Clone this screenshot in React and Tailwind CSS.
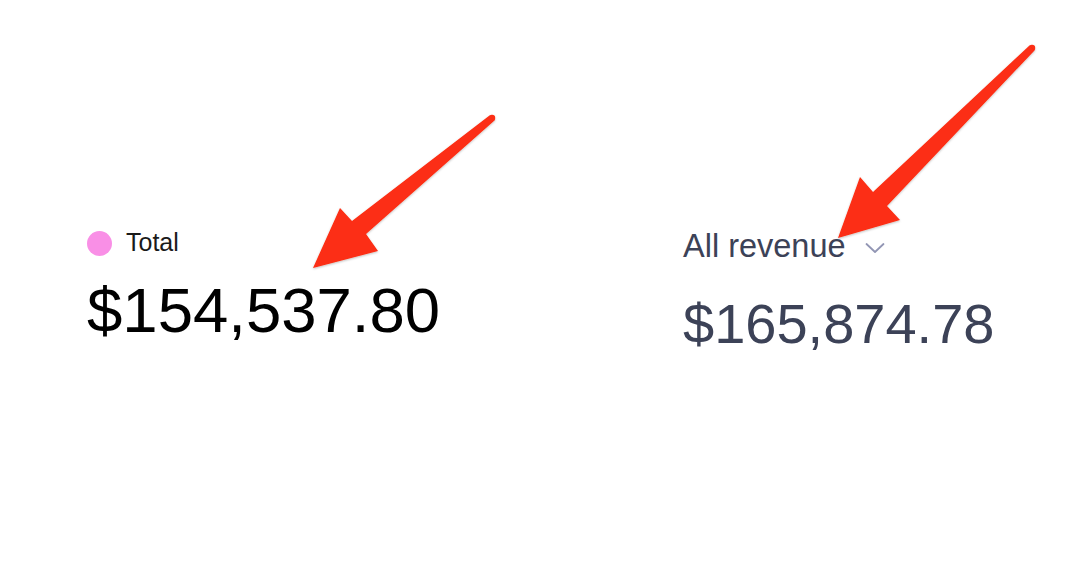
import React from 'react';

const Arrows = () => (
  <svg className="absolute inset-0 pointer-events-none" width="1080" height="578" viewBox="0 0 1080 578">
    <defs>
      <filter id="arrowShadow" x="-10%" y="-10%" width="120%" height="120%">
        <feDropShadow dx="0" dy="1" stdDeviation="1.2" floodColor="#000" floodOpacity="0.25" />
      </filter>
    </defs>
    <g fill="#fc2d12" filter="url(#arrowShadow)">
      {/* left arrow */}
      <circle cx="492" cy="118" r="3.2" />
      <polygon points="489.5,115.5 494.5,120.5 366,234 378,251 313,268 340,208 352,221" />
      {/* right arrow */}
      <circle cx="1032" cy="48" r="3.2" />
      <polygon points="1029.5,45.5 1034.5,50.5 887,206 900,220 838,238 860,177 873,192" />
    </g>
  </svg>
);

const App = () => {
  return (
    <div
      className="relative w-[1080px] h-[578px] bg-white overflow-hidden"
      style={{ fontFamily: '"Liberation Sans", Arial, sans-serif' }}
    >
      <div className="flex pt-[224px]">
        {/* Total block */}
        <div className="pl-[87px] w-[683px] shrink-0 pt-[2px]">
          <div className="flex items-center gap-[14px] h-[34px]">
            <span className="w-[25px] h-[25px] rounded-full bg-[#f98fe6]" />
            <span className="text-[25px] text-[#1a1a1a]">Total</span>
          </div>
          <div className="mt-[19px] text-[63.5px] leading-none text-black">
            $154,537.80
          </div>
        </div>

        {/* All revenue block */}
        <div>
          <div className="flex items-center gap-[19px] h-[44px]">
            <span className="text-[32.5px] text-[#3c4257]">All revenue</span>
            <svg width="20" height="12" viewBox="0 0 20 12" fill="none" className="mt-[3px]">
              <path d="M1.5 2l8.5 8L18.5 2" stroke="#9296b4" strokeWidth="1.8" strokeLinecap="round" strokeLinejoin="round" />
            </svg>
          </div>
          <div className="mt-[28px] text-[56px] leading-none text-[#3c4257]">
            $165,874.78
          </div>
        </div>
      </div>

      <Arrows />
    </div>
  );
};

export default App;
